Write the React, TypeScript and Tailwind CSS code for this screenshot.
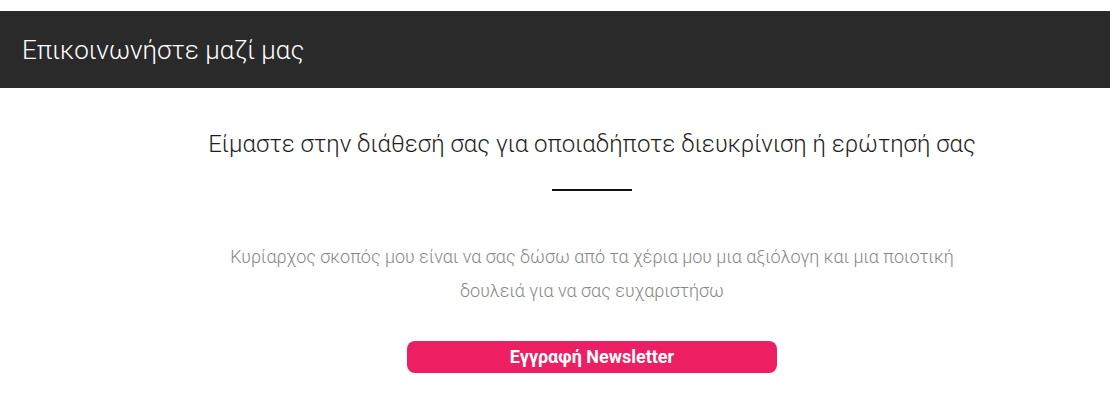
export default function App() {
  return (
    <div className="w-[1110px] h-[411px] bg-white font-['Roboto',sans-serif] pt-[11px]">
      {/* Title bar */}
      <div className="h-[77px] bg-[#2a2a2a] flex items-center px-[22px]">
        <h1 className="text-[26px] font-light text-white leading-none">
          Επικοινωνήστε μαζί μας
        </h1>
      </div>

      {/* Content */}
      <div className="flex flex-col items-center pl-[74px]">
        <h2 className="mt-[40px] text-[24px] font-light text-[#1e1e1e] leading-[32px]">
          Είμαστε στην διάθεσή σας για οποιαδήποτε διευκρίνιση ή ερώτησή σας
        </h2>
        <div className="mt-[29px] w-[80px] h-[2px] bg-[#111]" />
        <p className="mt-[49px] text-center text-[18px] font-light text-[#878787] leading-[34px]">
          Κυρίαρχος σκοπός μου είναι να σας δώσω από τα χέρια μου μια αξιόλογη και μια ποιοτική
          <br />
          δουλειά για να σας ευχαριστήσω
        </p>
        <button className="mt-[33px] w-[370px] h-[32px] rounded-[8px] bg-[#ec1f63] text-white font-bold text-[18px] leading-none">
          Εγγραφή Newsletter
        </button>
      </div>
    </div>
  );
}
